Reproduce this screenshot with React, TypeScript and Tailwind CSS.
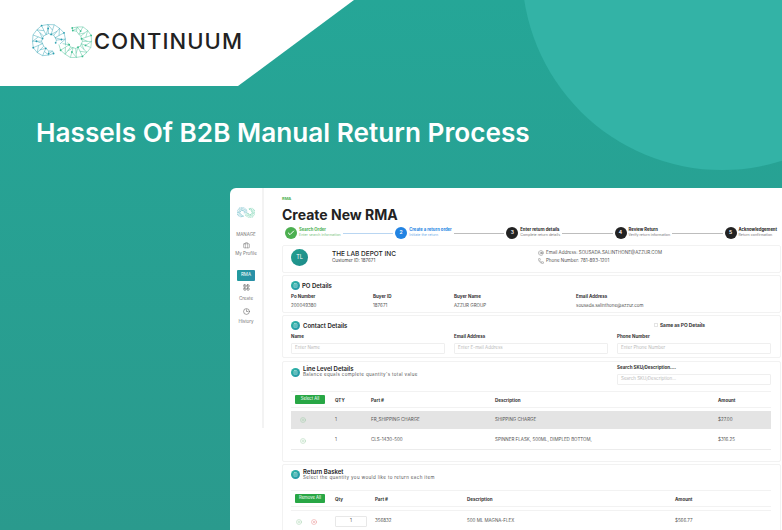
import React from "react";
import { AtSign, Check, CirclePlus, CircleX, Clock3, LayoutGrid, Phone, ClipboardList, Briefcase } from "lucide-react";

const font = { fontFamily: "Inter, 'Liberation Sans', sans-serif" };

// builds the mesh of one logo arm from a centre line
function band(cx: number, cy: number, from: number, to: number, n: number) {
  const outer: number[][] = [];
  const middle: number[][] = [];
  const inner: number[][] = [];
  for (let i = 0; i <= n; i++) {
    const t = i / n;
    const a = ((from + (to - from) * t) * Math.PI) / 180;
    const w = 1 + 3.8 * Math.min(1, t * 5);
    const wobble = i % 2 === 0 ? 0.3 : -0.3;
    const at = (r: number) => [cx + Math.cos(a) * r, cy + Math.sin(a) * r];
    outer.push(at(12 + w + wobble));
    middle.push(at(12 - wobble * 2));
    inner.push(at(12 - w - wobble));
  }
  const lines: number[][] = [];
  for (let i = 0; i < n; i++) {
    lines.push([...outer[i], ...outer[i + 1]]);
    lines.push([...inner[i], ...inner[i + 1]]);
    lines.push([...outer[i], ...middle[i]]);
    lines.push([...middle[i], ...inner[i]]);
    lines.push(i % 2 ? [...outer[i], ...middle[i + 1]] : [...inner[i], ...middle[i + 1]]);
  }
  return { lines, nodes: [...outer, ...middle, ...inner] };
}

function Mesh({ data, color, stroke }: { data: ReturnType<typeof band>; color: string; stroke: number }) {
  return (
    <g stroke={color} fill={color}>
      {data.lines.map((l, i) => (
        <line key={i} x1={l[0]} y1={l[1]} x2={l[2]} y2={l[3]} strokeWidth={stroke} />
      ))}
      {data.nodes.map((p, i) =>
        i % 4 === 0 ? <circle key={i} cx={p[0]} cy={p[1]} r={0.9} stroke="none" /> : null
      )}
    </g>
  );
}

function Logo({ className, stroke = 0.45 }: { className: string; stroke?: number }) {
  return (
    <svg viewBox="0 0 60 34" className={className}>
      <Mesh data={band(17, 17, 70, 375, 14)} color="#2a9fb0" stroke={stroke} />
      <Mesh data={band(43, 17, -102, 168, 13)} color="#3dbd8f" stroke={stroke} />
    </svg>
  );
}

function SectionBadge() {
  return (
    <div className="w-[9px] h-[9px] rounded-full bg-gradient-to-br from-[#2fb8a4] to-[#2592a8] flex items-center justify-center shrink-0">
      <ClipboardList className="w-[5px] h-[5px] text-[#cfeeea]" strokeWidth={2} />
    </div>
  );
}

function Step({ n, title, sub, state }: { n: string; title: string; sub: string; state?: "done" | "active" }) {
  const bg = state === "done" ? "bg-[#4caf50]" : state === "active" ? "bg-[#2283e2]" : "bg-[#222222]";
  const tc = state === "done" ? "text-[#4caf50]" : state === "active" ? "text-[#2283e2]" : "text-[#222222]";
  return (
    <div className="flex items-center gap-[2px] shrink-0">
      <div className={`w-[12px] h-[12px] rounded-full ${bg} flex items-center justify-center text-white text-[5px] font-semibold`}>
        {state === "done" ? <Check className="w-[8px] h-[8px]" strokeWidth={3} /> : n}
      </div>
      <div className="leading-none">
        <div className={`text-[4.2px] font-bold ${tc} mb-[2px]`}>{title}</div>
        <div className={`text-[3.6px] ${state === "done" ? "text-[#7cc47f]" : state === "active" ? "text-[#6aa9e8]" : "text-[#777777]"}`}>{sub}</div>
      </div>
    </div>
  );
}

function Field({ label, placeholder }: { label: string; placeholder: string }) {
  return (
    <div>
      <div className="text-[4.5px] font-bold text-[#333333] leading-none mb-[3px]">{label}</div>
      <div className="h-[11px] border border-[#efefef] rounded-[1px] flex items-center px-[3px] text-[4.5px] text-[#bbbbbb]">{placeholder}</div>
    </div>
  );
}

const cardClass = "border border-[#f2f2f2] rounded-[2px] bg-white pl-2 pr-[9px]";

export default function App() {
  return (
    <div className="relative w-[782px] h-[530px] overflow-hidden bg-gradient-to-b from-[#25a697] to-[#2a9a8d] flex flex-col" style={font}>
      {/* background circle */}
      <div className="absolute left-[522px] top-[-230px] w-[400px] h-[400px] rounded-full bg-[#33b3a6]" />

      <div className="relative h-[86px] w-[354px] bg-white [clip-path:polygon(0_0,100%_0,238px_100%,0_100%)] flex items-center pl-[32px] pb-[4px] gap-[2px] shrink-0">
        <Logo className="w-[60px] h-[34px]" />
        <span className="text-[22px] font-medium tracking-[1.1px] text-[#222222] leading-none">CONTINUUM</span>
      </div>

      <h1 className="relative pl-9 pt-[34px] h-[102px] text-[26.2px] leading-[26px] font-semibold text-white shrink-0">
        Hassels Of B2B Manual Return Process
      </h1>

      <div className="relative ml-[230px] flex-1 bg-white rounded-tl-[6px] flex overflow-hidden">
        {/* sidebar */}
        <div className="w-[34px] h-[240px] border-r-2 border-[#f3f3f3] flex flex-col items-center pt-[19px] shrink-0 text-[4.5px] text-[#777777] leading-none">
          <Logo className="w-[18px] h-[11px] mb-[15px]" stroke={0.7} />
          <div className="mb-[4px]">MANAGE</div>
          <Briefcase className="w-[7px] h-[7px] text-[#666666] mb-[3px]" strokeWidth={1.5} />
          <span>My Profile</span>
          <div className="w-[18px] h-[11px] mt-[14px] mb-[3px] bg-gradient-to-r from-[#219a9e] to-[#2a8fa8] rounded-[1px] flex items-center justify-center text-white">RMA</div>
          <LayoutGrid className="w-[7px] h-[7px] text-[#555555] mb-[6px]" strokeWidth={2} />
          <span>Create</span>
          <Clock3 className="w-[7px] h-[7px] text-[#666666] mt-[6px] mb-[5px]" strokeWidth={2} />
          <span>History</span>
        </div>

        {/* main */}
        <div className="flex-1 pl-[18px] pr-[1px] pt-[9px] min-w-0">
          <div className="text-[4px] font-bold text-[#4caf50] leading-none mb-[5px]">RMA</div>
          <div className="text-[14px] font-bold text-[#222222] leading-[18px]">Create New RMA</div>

          <div className="flex items-center gap-[2px] px-[3px] pr-[4px] h-[12px] mt-[3px]">
            <Step n="1" title="Search Order" sub="Enter search information" state="done" />
            <div className="flex-1 h-px bg-[#b9d6f2]" />
            <Step n="2" title="Create a return order" sub="Initiate the return" state="active" />
            <div className="flex-1 h-px bg-[#bdbdbd]" />
            <Step n="3" title="Enter return details" sub="Complete return details" />
            <div className="flex-1 h-px bg-[#bdbdbd]" />
            <Step n="4" title="Review Return" sub="Verify return information" />
            <div className="flex-1 h-px bg-[#bdbdbd]" />
            <Step n="5" title="Acknowledgement" sub="Return confirmation" />
          </div>

          <div className="flex flex-col gap-[2px] mt-[6px]">
            {/* customer */}
            <div className={`${cardClass} h-[28px] flex items-center pb-[3px]`}>
              <div className="w-[17px] h-[17px] rounded-full bg-gradient-to-br from-[#23a08f] to-[#1d8a8a] flex items-center justify-center text-[5.5px] text-white shrink-0">TL</div>
              <div className="ml-[24px] w-[206px] leading-none mb-[1px]">
                <div className="text-[6.5px] font-medium text-[#222222] mb-[2px]">THE LAB DEPOT INC</div>
                <div className="text-[4.5px] text-[#444444]">Customer ID: 187671</div>
              </div>
              <div className="text-[4.5px] text-[#555555] leading-none flex flex-col gap-[2px] mb-[1px]">
                <div className="flex items-center gap-[2px]"><AtSign className="w-[6px] h-[6px]" strokeWidth={1.5} />Email Address: SOUSADA.SALINTHONE@AZZUR.COM</div>
                <div className="flex items-center gap-[2px]"><Phone className="w-[6px] h-[6px]" strokeWidth={1.5} />Phone Number: 781-893-1201</div>
              </div>
            </div>

            {/* po details */}
            <div className={`${cardClass} h-[38px] pt-[5px]`}>
              <div className="flex items-center gap-[2px] mb-[5px]">
                <SectionBadge />
                <span className="text-[6px] font-semibold text-[#222222] leading-none">PO Details</span>
              </div>
              <div className="grid grid-cols-[82px_81px_122px_1fr] text-[4.5px] leading-none">
                <div><div className="font-bold text-[#333333] mb-[4px]">Po Number</div><div className="text-[#555555]">200049380</div></div>
                <div><div className="font-bold text-[#333333] mb-[4px]">Buyer ID</div><div className="text-[#555555]">187671</div></div>
                <div><div className="font-bold text-[#333333] mb-[4px]">Buyer Name</div><div className="text-[#555555]">AZZUR GROUP</div></div>
                <div><div className="font-bold text-[#333333] mb-[4px]">Email Address</div><div className="text-[#555555]">sousada.salinthone@azzur.com</div></div>
              </div>
            </div>

            {/* contact */}
            <div className={`${cardClass} h-[43px] pt-[5px]`}>
              <div className="flex items-center justify-between mb-[5px]">
                <div className="flex items-center gap-[3px]">
                  <SectionBadge />
                  <span className="text-[6px] font-semibold text-[#222222] leading-none">Contact Details</span>
                </div>
                <div className="flex items-center gap-[2px] mr-[66px]">
                  <div className="w-[4px] h-[4px] border border-[#e4e4e4]" />
                  <span className="text-[4.8px] font-bold text-[#333333] leading-none">Same as PO Details</span>
                </div>
              </div>
              <div className="grid grid-cols-3 gap-[9px]">
                <Field label="Name" placeholder="Enter Name" />
                <Field label="Email Address" placeholder="Enter E-mail Address" />
                <Field label="Phone Number" placeholder="Enter Phone Number" />
              </div>
            </div>

            {/* line level */}
            <div className={`${cardClass} h-[101px] mt-px pt-[4px]`}>
              <div className="flex justify-between h-[25px]">
                <div className="flex items-center gap-[3px] h-[12px]">
                  <SectionBadge />
                  <div className="leading-none">
                    <div className="text-[6px] font-semibold text-[#222222] mb-[1px]">Line Level Details</div>
                    <div className="text-[4.5px] tracking-[0.35px] text-[#555555]">Balance equals complete quantity's total value</div>
                  </div>
                </div>
                <div className="w-[154px]">
                  <div className="text-[4.5px] font-bold text-[#333333] leading-none mb-[3px]">Search SKU/Description....</div>
                  <div className="h-[11px] border border-[#efefef] rounded-[1px] flex items-center px-[3px] text-[4.5px] text-[#bbbbbb]">Search SKU/Description...</div>
                </div>
              </div>
              <div className="grid grid-cols-[44px_36px_124px_223px_1fr] items-center h-[17px] border-y border-[#f2f2f2] text-[4.5px] font-bold text-[#333333] [&>div+div]:pt-[3px]">
                <div className="pl-[4px]"><div className="w-[30px] h-[9px] bg-[#28a745] text-white font-normal text-[4.2px] flex items-center justify-center rounded-[1px]">Select All</div></div>
                <div>QTY</div><div>Part #</div><div>Description</div><div>Amount</div>
              </div>
              <div className="grid grid-cols-[44px_36px_124px_223px_1fr] items-center h-[18px] mt-[3px] bg-[#e4e4e4] text-[4.5px] text-[#555555]">
                <div className="pl-[9px]"><CirclePlus className="w-[6px] h-[6px] text-[#8fc79a]" strokeWidth={1.5} /></div>
                <div>1</div><div>FR_SHIPPING CHARGE</div><div>SHIPPING CHARGE</div><div>$27.00</div>
              </div>
              <div className="grid grid-cols-[44px_36px_124px_223px_1fr] items-center h-[18px] mt-[3px] border-b border-[#ececec] text-[4.5px] text-[#555555]">
                <div className="pl-[9px]"><CirclePlus className="w-[6px] h-[6px] text-[#8fc79a]" strokeWidth={1.5} /></div>
                <div>1</div><div>CLS-1430-500</div><div>SPINNER FLASK, 500ML, DIMPLED BOTTOM,</div><div>$316.25</div>
              </div>
            </div>

            {/* return basket */}
            <div className={`${cardClass} h-[70px] pt-[4px]`}>
              <div className="flex items-center gap-[3px] h-[11px] mb-[10px]">
                <SectionBadge />
                <div className="leading-none">
                  <div className="text-[6px] font-semibold text-[#222222] mb-[1px]">Return Basket</div>
                  <div className="text-[4.5px] tracking-[0.35px] text-[#555555]">Select the quantity you would like to return each item</div>
                </div>
              </div>
              <div className="grid grid-cols-[44px_40px_92px_208px_1fr] items-center h-[17px] border-y border-[#f2f2f2] text-[4.5px] font-bold text-[#333333] [&>div+div]:pt-[3px]">
                <div className="pl-[4px]"><div className="w-[30px] h-[9px] bg-[#28a745] text-white font-normal text-[4.2px] flex items-center justify-center rounded-[1px]">Remove All</div></div>
                <div>Qty</div><div>Part #</div><div>Description</div><div>Amount</div>
              </div>
              <div className="grid grid-cols-[44px_40px_92px_208px_1fr] items-center h-[22px] mt-[3px] border-t border-[#f2f2f2] text-[4.5px] text-[#555555]">
                <div className="pl-[5px] flex gap-[9px]">
                  <CirclePlus className="w-[6px] h-[6px] text-[#8fc79a]" strokeWidth={1.5} />
                  <CircleX className="w-[6px] h-[6px] text-[#e57373]" strokeWidth={1.5} />
                </div>
                <div><div className="w-[32px] h-[11px] border border-[#e8e8e8] rounded-[1px] flex items-center justify-center">1</div></div>
                <div>356832</div><div>500 ML MAGNA-FLEX</div><div>$566.77</div>
              </div>
            </div>
          </div>
        </div>
      </div>
    </div>
  );
}
